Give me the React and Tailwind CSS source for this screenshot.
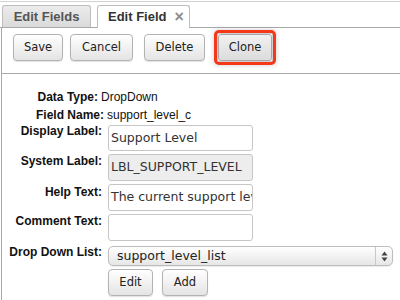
import React from "react";

const sans = { fontFamily: '"Liberation Sans", Arial, sans-serif' };
const ui = { fontFamily: '"DejaVu Sans", "Lucida Grande", sans-serif' };

function Btn({ children, className = "" }) {
  return (
    <div
      className={
        "h-[27px] flex items-center justify-center rounded-[4px] border border-[#b3b3b3] bg-gradient-to-b from-[#ffffff] to-[#e4e4e4] text-[11.5px] text-[#222] shadow-[0_1px_1px_rgba(0,0,0,0.12)] " +
        className
      }
      style={ui}
    >
      {children}
    </div>
  );
}

function Label({ children, className = "" }) {
  return (
    <div
      className={"w-[100px] shrink-0 text-right text-[12px] font-bold leading-[12px] text-[#111] " + className}
      style={sans}
    >
      {children}
    </div>
  );
}

function Input({ value, grey = false, className = "" }) {
  return (
    <div
      className={
        "ml-[6px] w-[145px] rounded-[3px] border border-[#c6c6c6] pl-[2px] flex items-center overflow-hidden whitespace-nowrap text-[12.5px] text-[#333] " +
        (grey ? "bg-[#ededed] " : "bg-white ") +
        className
      }
      style={ui}
    >
      {value}
    </div>
  );
}

export default function App() {
  return (
    <div className="w-[400px] h-[300px] overflow-hidden bg-white">
      {/* tab bar */}
      <div className="mt-px h-[27px] box-border border-t border-b border-t-[#d2d2d2] border-b-[#a9a9a9] pt-[3px] pl-[2px] flex items-start gap-[6px]">
        <div
          className="w-[89px] h-[22px] rounded-t-[3px] border border-b-0 border-[#bdbdbd] bg-gradient-to-b from-[#ececec] to-[#dadada] flex items-center justify-center text-[13px] font-bold text-[#555]"
          style={sans}
        >
          Edit Fields
        </div>
        <div
          className="relative z-10 w-[93px] h-[23px] rounded-t-[3px] border border-b-0 border-[#bdbdbd] bg-white flex items-center pl-[10px] gap-[8px] text-[13px] font-bold text-[#333]"
          style={sans}
        >
          <span>Edit Field</span>
          <span className="text-[16px] leading-none text-[#8c8c8c]">×</span>
        </div>
      </div>

      {/* content */}
      <div className="ml-px border-l border-[#a9a9a9] h-[272px]">
        {/* toolbar */}
        <div className="pt-[6px] pb-[12px] pl-[11px] flex border-b border-[#a9a9a9]">
          <Btn className="w-[50px]">Save</Btn>
          <Btn className="w-[63px] ml-[7px]">Cancel</Btn>
          <Btn className="w-[61px] ml-[11px]">Delete</Btn>
          <div className="ml-[13px] outline-[3px] outline-solid outline-[#f5371a] outline-offset-[1px] rounded-[1px] shadow-[0_0_5px_4px_rgba(0,0,0,0.2)]">
            <div
              className="w-[54px] h-[27px] flex items-center justify-center rounded-[3px] border border-[#a8a8a8] bg-gradient-to-b from-[#f1f1f1] to-[#dcdcdc] text-[11.5px] text-[#222]"
              style={ui}
            >
              Clone
            </div>
          </div>
        </div>

        {/* form */}
        <div className="pt-[14px] flex flex-col">
          <div className="h-[18px] flex items-center text-[12px] leading-[18px]" style={sans}>
            <div className="w-[96px] text-right font-bold text-[#111]">Data Type:</div>
            <div className="ml-[3px] text-[#111]">DropDown</div>
          </div>
          <div className="h-[18px] flex items-center text-[12px] leading-[18px]" style={sans}>
            <div className="w-[102px] text-right font-bold text-[#111]">Field Name:</div>
            <div className="ml-[3px] text-[#111]">support_level_c</div>
          </div>

          <div className="mt-px flex items-start">
            <Label className="pt-0">Display Label:</Label>
            <Input value="Support Level" className="h-[26px]" />
          </div>
          <div className="mt-[3px] flex items-start">
            <Label className="pt-[1px]">System Label:</Label>
            <Input value="LBL_SUPPORT_LEVEL" grey className="h-[27px]" />
          </div>
          <div className="mt-[3px] flex items-start">
            <Label className="pt-[2px]">Help Text:</Label>
            <Input value="The current support level" className="h-[27px]" />
          </div>
          <div className="mt-[3px] flex items-start">
            <Label className="pt-[1px]">Comment Text:</Label>
            <Input value="" className="h-[27px]" />
          </div>
          <div className="mt-[5px] flex items-start">
            <Label className="pt-0">Drop Down List:</Label>
            <div
              className="ml-[6px] w-[285px] h-[20px] rounded-[5px] border border-[#bdbdbd] bg-gradient-to-b from-[#ffffff] to-[#e6e6e6] flex items-center text-[12.5px] text-[#222] shadow-[0_1px_1px_rgba(0,0,0,0.08)]"
              style={ui}
            >
              <div className="flex-1 pl-[8px]">support_level_list</div>
              <div className="w-[17px] h-full border-l border-[#c8c8c8] flex items-center justify-center">
                <svg width="7" height="11" viewBox="0 0 7 11">
                  <path d="M3.5 0.5 L6.5 4.5 L0.5 4.5 Z" fill="#444" />
                  <path d="M3.5 10.5 L6.5 6.5 L0.5 6.5 Z" fill="#444" />
                </svg>
              </div>
            </div>
          </div>
          <div className="mt-[3px] flex">
            <Btn className="ml-[106px] w-[45px]">Edit</Btn>
            <Btn className="ml-[9px] w-[46px]">Add</Btn>
          </div>
        </div>
      </div>
    </div>
  );
}
